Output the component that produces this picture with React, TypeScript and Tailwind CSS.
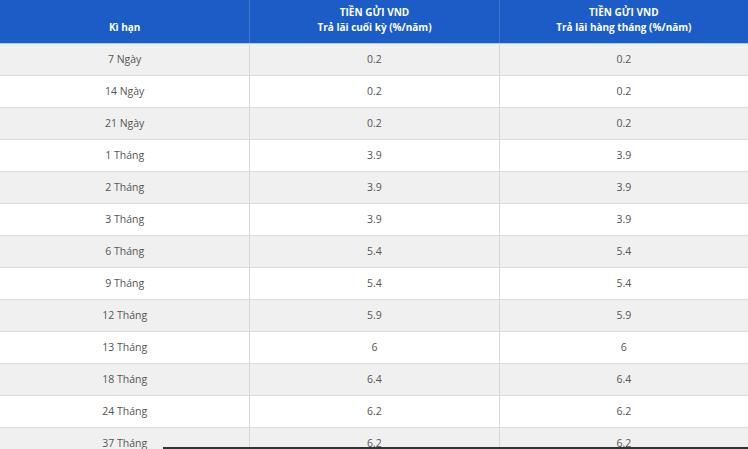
const rows: [string, string, string][] = [
  ['7 Ngày', '0.2', '0.2'],
  ['14 Ngày', '0.2', '0.2'],
  ['21 Ngày', '0.2', '0.2'],
  ['1 Tháng', '3.9', '3.9'],
  ['2 Tháng', '3.9', '3.9'],
  ['3 Tháng', '3.9', '3.9'],
  ['6 Tháng', '5.4', '5.4'],
  ['9 Tháng', '5.4', '5.4'],
  ['12 Tháng', '5.9', '5.9'],
  ['13 Tháng', '6', '6'],
  ['18 Tháng', '6.4', '6.4'],
  ['24 Tháng', '6.2', '6.2'],
  ['37 Tháng', '6.2', '6.2'],
];

export default function App() {
  return (
    <div className="relative h-[449px] w-[748px] overflow-hidden bg-white font-['Open_Sans','Noto_Sans',sans-serif]">
      {/* Header */}
      <div className="grid h-[44px] grid-cols-3 border-b border-[#9fd3f2] bg-[#1c5cc7] text-[10px] font-bold leading-[15px] text-white">
        <div className="flex items-end justify-center pb-[8px]">Kì hạn</div>
        <div className="flex flex-col items-center justify-end border-l border-[#3f77d2] pb-[8px]">
          <span>TIỀN GỬI VND</span>
          <span>Trả lãi cuối kỳ (%/năm)</span>
        </div>
        <div className="flex flex-col items-center justify-end border-l border-[#3f77d2] pb-[8px]">
          <span>TIỀN GỬI VND</span>
          <span>Trả lãi hàng tháng (%/năm)</span>
        </div>
      </div>

      {/* Rows */}
      {rows.map(([term, a, b], i) => (
        <div
          key={term}
          className={`grid h-[32px] grid-cols-3 border-b border-[#dcdcdc] text-[10.5px] text-[#555] ${
            i % 2 === 0 ? 'bg-[#f0f0f0]' : 'bg-white'
          }`}
        >
          <div className="flex items-center justify-center">{term}</div>
          <div className="flex items-center justify-center border-l border-[#d6d6d6]">{a}</div>
          <div className="flex items-center justify-center border-l border-[#d6d6d6]">{b}</div>
        </div>
      ))}

      {/* bottom bar */}
      <div className="absolute bottom-0 left-[163px] right-0 h-[2px] bg-[#333]" />
    </div>
  );
}
